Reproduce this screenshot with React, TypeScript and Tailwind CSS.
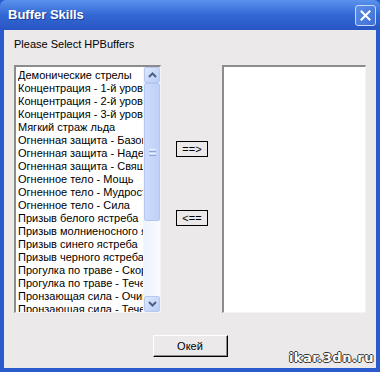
import { useState } from 'react'

const skills = [
  'Демонические стрелы',
  'Концентрация - 1-й уровень',
  'Концентрация - 2-й уровень',
  'Концентрация - 3-й уровень',
  'Мягкий страж льда',
  'Огненная защита - Базовая',
  'Огненная защита - Надежная',
  'Огненная защита - Священная',
  'Огненное тело - Мощь',
  'Огненное тело - Мудрость',
  'Огненное тело - Сила',
  'Призыв белого ястреба',
  'Призыв молниеносного ястреба',
  'Призыв синего ястреба',
  'Призыв черного ястреба',
  'Прогулка по траве - Скорость',
  'Прогулка по траве - Течение',
  'Пронзающая сила - Очищение',
  'Пронзающая сила - Течение',
]

const ui = { fontFamily: '"Liberation Sans", Tahoma, Arial, sans-serif' }

function ScrollArrow({ down }: { down?: boolean }) {
  return (
    <div className="flex h-[16px] w-[16px] items-center justify-center rounded-[2px] border border-[#b7c9f1] bg-gradient-to-br from-[#dfe8fd] to-[#b9cdf7]">
      <svg width="9" height="6" viewBox="0 0 9 6" className={down ? 'rotate-180' : ''}>
        <path d="M1 5 L4.5 1.5 L8 5" fill="none" stroke="#4d6185" strokeWidth="2" />
      </svg>
    </div>
  )
}

function ScrollBar() {
  return (
    <div className="flex w-[17px] shrink-0 flex-col bg-[#f1f5fd] pl-[1px]">
      <ScrollArrow />
      <div className="flex h-[138px] w-[16px] items-center justify-center rounded-[2px] border border-[#b4c7f0] bg-gradient-to-r from-[#cddcfb] to-[#bed0f8]">
        <div className="flex flex-col gap-[1px]">
          <div className="h-[1px] w-[7px] bg-[#eef3fe]" />
          <div className="h-[1px] w-[7px] bg-[#8ea6d9]" />
          <div className="h-[1px] w-[7px] bg-[#eef3fe]" />
          <div className="h-[1px] w-[7px] bg-[#8ea6d9]" />
        </div>
      </div>
      <div className="flex-1 bg-gradient-to-r from-[#eef3fc] to-[#f8fafe]" />
      <ScrollArrow down />
    </div>
  )
}

function ArrowButton({ label }: { label: string }) {
  return (
    <button className="flex h-[16px] w-[32px] items-center justify-center border border-black bg-[#ece9eb] text-[11px] leading-none text-black">
      {label}
    </button>
  )
}

export default function App() {
  const [selected] = useState<string[]>([])

  return (
    <div className="flex h-[372px] w-[380px] flex-col overflow-hidden bg-[#2a5bcc]" style={ui}>
      {/* title bar */}
      <div className="flex h-[30px] shrink-0 items-center justify-between rounded-t-[6px] bg-gradient-to-b from-[#5b92ec] via-[#3367d4] to-[#2856c4] pl-[8px] pr-[4px]">
        <span className="text-[13px] font-bold text-white [text-shadow:1px_1px_0_#1c3f94]">Buffer Skills</span>
        <div className="flex h-[21px] w-[21px] items-center justify-center rounded-[3px] border border-[#c9d8f6] bg-gradient-to-br from-[#5c8fe8] to-[#3f6fd6]">
          <svg width="11" height="11" viewBox="0 0 11 11">
            <path d="M1.5 1.5 L9.5 9.5 M9.5 1.5 L1.5 9.5" stroke="white" strokeWidth="2" strokeLinecap="square" />
          </svg>
        </div>
      </div>

      {/* body */}
      <div className="relative mx-[4px] mb-[4px] flex flex-1 flex-col bg-[#ece9eb] px-[10px] pt-[8px]">
        <p className="text-[11px] leading-[13px] text-black">Please Select HPBuffers</p>

        <div className="mt-[14px] flex h-[248px]">
          {/* left list */}
          <div className="flex w-[147px] border-b border-l-2 border-r border-t-2 border-b-[#f4f4f4] border-l-[#8c8c8c] border-r-[#f4f4f4] border-t-[#8c8c8c] bg-white">
            <ul className="min-w-0 flex-1 overflow-hidden whitespace-nowrap pl-[2px] pt-[2px] text-[11px] leading-[13px] text-black">
              {skills.map((s) => (
                <li key={s} className="overflow-hidden">{s}</li>
              ))}
            </ul>
            <ScrollBar />
          </div>

          {/* middle buttons */}
          <div className="flex w-[61px] flex-col pl-[15px]">
            <div className="mt-[76px]">
              <ArrowButton label="==>" />
            </div>
            <div className="mt-[53px]">
              <ArrowButton label="<==" />
            </div>
          </div>

          {/* right list */}
          <div className="w-[145px] border-b border-l-2 border-r border-t-2 border-b-[#f4f4f4] border-l-[#8c8c8c] border-r-[#f4f4f4] border-t-[#8c8c8c] bg-white">
            {selected.map((s) => (
              <div key={s} className="text-[11px] leading-[13px]">{s}</div>
            ))}
          </div>
        </div>

        <div className="mt-[22px] flex justify-center">
          <button className="h-[22px] w-[75px] border border-b-black border-l-white border-r-black border-t-white bg-[#ece9eb] text-[11px] text-black shadow-[inset_-1px_-1px_0_#8c8c8c]">
            Окей
          </button>
        </div>

        <span
          className="absolute bottom-[1px] right-[2px] text-[13px] font-bold tracking-[0.5px] text-white [text-shadow:1px_0_0_#333,-1px_0_0_#333,0_1px_0_#333,0_-1px_0_#333]"
          style={{ fontFamily: '"DejaVu Sans", Verdana, sans-serif' }}
        >
          ikar.3dn.ru
        </span>
      </div>
    </div>
  )
}
